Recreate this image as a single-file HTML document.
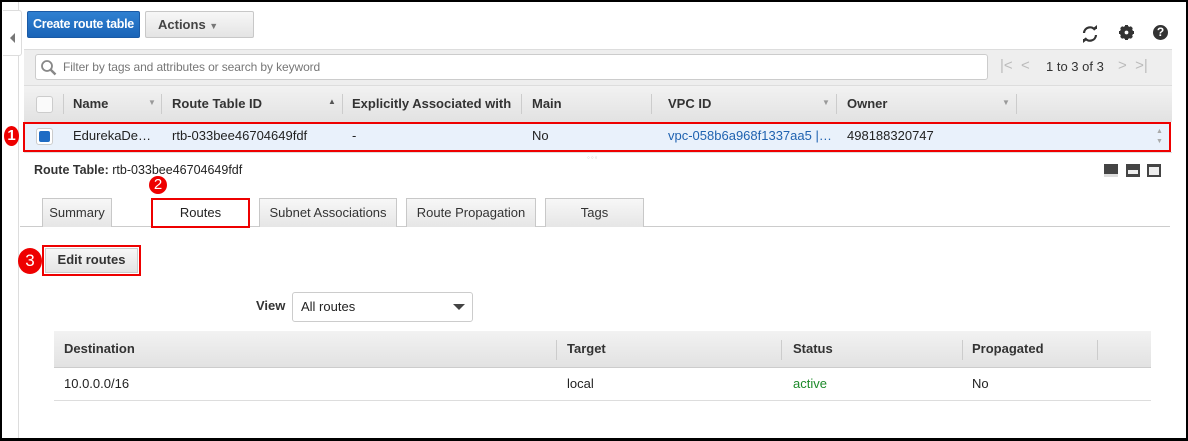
<!DOCTYPE html>
<html><head><style>
*{box-sizing:border-box;margin:0;padding:0}
body{width:1188px;height:441px;background:#000;font-family:"Liberation Sans",Arial,sans-serif;font-size:13px;color:#222;position:relative;overflow:hidden}
.page{position:absolute;left:2px;top:2px;width:1184px;height:436px;background:#fff}
.a{position:absolute}
.hdr{background:linear-gradient(#f2f2f2,#e2e2e2)}
.b{font-weight:bold;color:#333}
.sep{position:absolute;width:1px;background:#ccc}
.mk{position:absolute;background:#e00;color:#fff;border-radius:50%;text-align:center;font-size:15px}
.tab{position:absolute;top:198px;height:29px;border:1px solid #c8c8c8;border-bottom:none;background:linear-gradient(#f7f7f7,#e6e6e6);text-align:center;line-height:28px;color:#333;font-size:13px}
</style></head><body>
<div class="page"></div>
<div class="a" style="left:2px;top:2px;width:17px;height:436px;border-right:1px solid #ddd"></div>
<div class="a" style="left:3px;top:10px;width:19px;height:46px;background:#fff;border:1px solid #ddd;border-left:none;border-radius:0 3px 3px 0"></div>
<div class="a" style="left:10px;top:33px;width:0;height:0;border-top:5px solid transparent;border-bottom:5px solid transparent;border-right:5px solid #777"></div>

<div class="a" style="left:27px;top:11px;width:113px;height:27px;background:linear-gradient(#2f80d1,#1a64b8);border:1px solid #1a5aa5;border-radius:2px;color:#fff;font-weight:bold;line-height:25px;text-align:center;font-size:12.5px;letter-spacing:-0.3px">Create route table</div>
<div class="a" style="left:145px;top:11px;width:109px;height:27px;background:linear-gradient(#f7f7f7,#e4e4e4);border:1px solid #c8c8c8;border-radius:2px;color:#444;font-weight:bold;line-height:25px;padding-left:12px">Actions <span style="font-size:9px;color:#777">▼</span></div>

<svg class="a" style="left:1081px;top:25px" width="18" height="18" viewBox="0 0 18 18"><path d="M3 8a6 6 0 0 1 11-3" fill="none" stroke="#333" stroke-width="2.2"/><path d="M15 10a6 6 0 0 1-11 3" fill="none" stroke="#333" stroke-width="2.2"/><path d="M11 4h5V0z M7 14H2v4z" fill="#333"/></svg>
<svg class="a" style="left:1119px;top:25px" width="15" height="15" viewBox="0 0 16 16"><circle cx="8" cy="8" r="5" fill="none" stroke="#333" stroke-width="4"/><g stroke="#333" stroke-width="3.2"><path d="M8 0v16M0 8h16M2.3 2.3l11.4 11.4M13.7 2.3L2.3 13.7"/></g><circle cx="8" cy="8" r="2" fill="#fff"/></svg>
<div class="a" style="left:1153px;top:25px;width:15px;height:15px;border-radius:50%;background:#333;color:#fff;font-weight:bold;font-size:12px;text-align:center;line-height:15px">?</div>

<div class="a" style="left:24px;top:49px;width:1148px;height:36px;background:#eee;border-top:1px solid #ddd"></div>
<div class="a" style="left:35px;top:54px;width:953px;height:26px;background:#fff;border:1px solid #ccc;border-radius:3px;color:#777;line-height:24px;padding-left:27px;font-size:12px;letter-spacing:-0.1px">Filter by tags and attributes or search by keyword</div>
<svg class="a" style="left:40px;top:59px" width="17" height="17" viewBox="0 0 17 17"><circle cx="7" cy="7" r="5" fill="none" stroke="#888" stroke-width="1.8"/><path d="M10.5 10.5l5 5" stroke="#888" stroke-width="2.4"/></svg>
<div class="a" style="left:1000px;top:57px;color:#bbb;font-size:15px">|&lt;&nbsp;&nbsp;&lt;</div>
<div class="a" style="left:1046px;top:59px;color:#333">1 to 3 of 3</div>
<div class="a" style="left:1118px;top:57px;color:#bbb;font-size:15px">&gt;&nbsp;&nbsp;&gt;|</div>

<div class="a hdr" style="left:24px;top:85px;width:1148px;height:37px;border-top:1px solid #ddd"></div>
<div class="a" style="left:36px;top:96px;width:17px;height:17px;border:1px solid #ccc;border-radius:3px;background:#fafafa"></div>
<div class="sep" style="left:63px;top:94px;height:20px"></div>
<div class="a b" style="left:73px;top:96px">Name</div><div class="a" style="left:148px;top:98px;font-size:8px;color:#999">▼</div>
<div class="sep" style="left:161px;top:94px;height:20px"></div>
<div class="a b" style="left:172px;top:96px">Route Table ID</div><div class="a" style="left:328px;top:97px;font-size:8px;color:#555">▲</div>
<div class="sep" style="left:342px;top:94px;height:20px"></div>
<div class="a b" style="left:352px;top:96px">Explicitly Associated with</div>
<div class="sep" style="left:521px;top:94px;height:20px"></div>
<div class="a b" style="left:532px;top:96px">Main</div>
<div class="sep" style="left:651px;top:94px;height:20px"></div>
<div class="a b" style="left:668px;top:96px">VPC ID</div><div class="a" style="left:822px;top:98px;font-size:8px;color:#999">▼</div>
<div class="sep" style="left:836px;top:94px;height:20px"></div>
<div class="a b" style="left:847px;top:96px">Owner</div><div class="a" style="left:1002px;top:98px;font-size:8px;color:#999">▼</div>
<div class="sep" style="left:1016px;top:94px;height:20px"></div>

<div class="a" style="left:24px;top:122px;width:1146px;height:29px;background:#e9f1fb"></div>
<div class="a" style="left:23px;top:122px;width:1148px;height:30px;border:2px solid #e00"></div>
<div class="a" style="left:36px;top:128px;width:17px;height:17px;border:1px solid #ccc;border-radius:3px;background:#fff"></div>
<div class="a" style="left:39px;top:131px;width:11px;height:11px;background:#1f6cc4;border-radius:2px"></div>
<div class="a" style="left:73px;top:128px">EdurekaDe…</div>
<div class="a" style="left:172px;top:128px">rtb-033bee46704649fdf</div>
<div class="a" style="left:352px;top:128px">-</div>
<div class="a" style="left:532px;top:128px">No</div>
<div class="a" style="left:668px;top:128px;color:#1f62b0">vpc-058b6a968f1337aa5 |…</div>
<div class="a" style="left:847px;top:128px">498188320747</div>
<div class="a" style="left:1156px;top:127px;font-size:7px;color:#aaa;line-height:10px">▲<br>▼</div>
<div class="mk" style="left:4px;top:126px;width:15px;height:20px;border-radius:50%;line-height:20px;font-weight:bold">1</div>
<div class="a" style="left:24px;top:152px;width:1148px;height:1px;background:#ddd"></div>
<div class="a" style="left:587px;top:153px;font-size:8px;color:#ccc;letter-spacing:1px">◦◦◦</div>

<div class="a" style="left:34px;top:163px;font-size:12.5px"><b style="color:#333">Route Table:</b> rtb-033bee46704649fdf</div>
<div class="a" style="left:1104px;top:164px;width:14px;height:13px;background:#444;border-bottom:3px solid #ddd"></div>
<div class="a" style="left:1126px;top:164px;width:14px;height:13px;background:#444"><div style="position:absolute;left:2px;top:6px;width:10px;height:4px;background:#eee"></div></div>
<div class="a" style="left:1147px;top:164px;width:14px;height:13px;background:#444"><div style="position:absolute;left:2px;top:3px;width:10px;height:8px;background:#eee"></div></div>
<div class="mk" style="left:149px;top:176px;width:18px;height:18px;line-height:18px">2</div>

<div class="a" style="left:20px;top:226px;width:1150px;height:1px;background:#ccc"></div>
<div class="tab" style="left:42px;width:70px">Summary</div>
<div class="tab" style="left:151px;width:99px;height:30px;background:#fff;border:2px solid #e00;line-height:26px;color:#222">Routes</div>
<div class="tab" style="left:259px;width:138px">Subnet Associations</div>
<div class="tab" style="left:406px;width:130px">Route Propagation</div>
<div class="tab" style="left:545px;width:99px">Tags</div>

<div class="a" style="left:42px;top:245px;width:99px;height:31px;border:2px solid #e00;background:#fff"></div>
<div class="a" style="left:45px;top:248px;width:93px;height:25px;background:linear-gradient(#f7f7f7,#e4e4e4);border:1px solid #ccc;font-weight:bold;color:#333;text-align:center;line-height:22px">Edit routes</div>
<div class="mk" style="left:18px;top:248px;width:24px;height:26px;line-height:26px;font-size:17px">3</div>

<div class="a b" style="left:256px;top:298px">View</div>
<div class="a" style="left:292px;top:292px;width:181px;height:30px;border:1px solid #ccc;border-radius:3px;line-height:27px;padding-left:8px">All routes</div>
<div class="a" style="left:453px;top:304px;width:0;height:0;border-left:6px solid transparent;border-right:6px solid transparent;border-top:6px solid #444"></div>

<div class="a hdr" style="left:54px;top:331px;width:1097px;height:37px;border-bottom:1px solid #ccc"></div>
<div class="a b" style="left:64px;top:341px">Destination</div>
<div class="sep" style="left:556px;top:340px;height:20px"></div>
<div class="a b" style="left:567px;top:341px">Target</div>
<div class="sep" style="left:781px;top:340px;height:20px"></div>
<div class="a b" style="left:793px;top:341px">Status</div>
<div class="sep" style="left:962px;top:340px;height:20px"></div>
<div class="a b" style="left:972px;top:341px">Propagated</div>
<div class="sep" style="left:1097px;top:340px;height:20px"></div>
<div class="a" style="left:64px;top:376px">10.0.0.0/16</div>
<div class="a" style="left:567px;top:376px">local</div>
<div class="a" style="left:793px;top:376px;color:#1d8a2a">active</div>
<div class="a" style="left:972px;top:376px">No</div>
<div class="a" style="left:54px;top:400px;width:1097px;height:1px;background:#ddd"></div>
</body></html>
